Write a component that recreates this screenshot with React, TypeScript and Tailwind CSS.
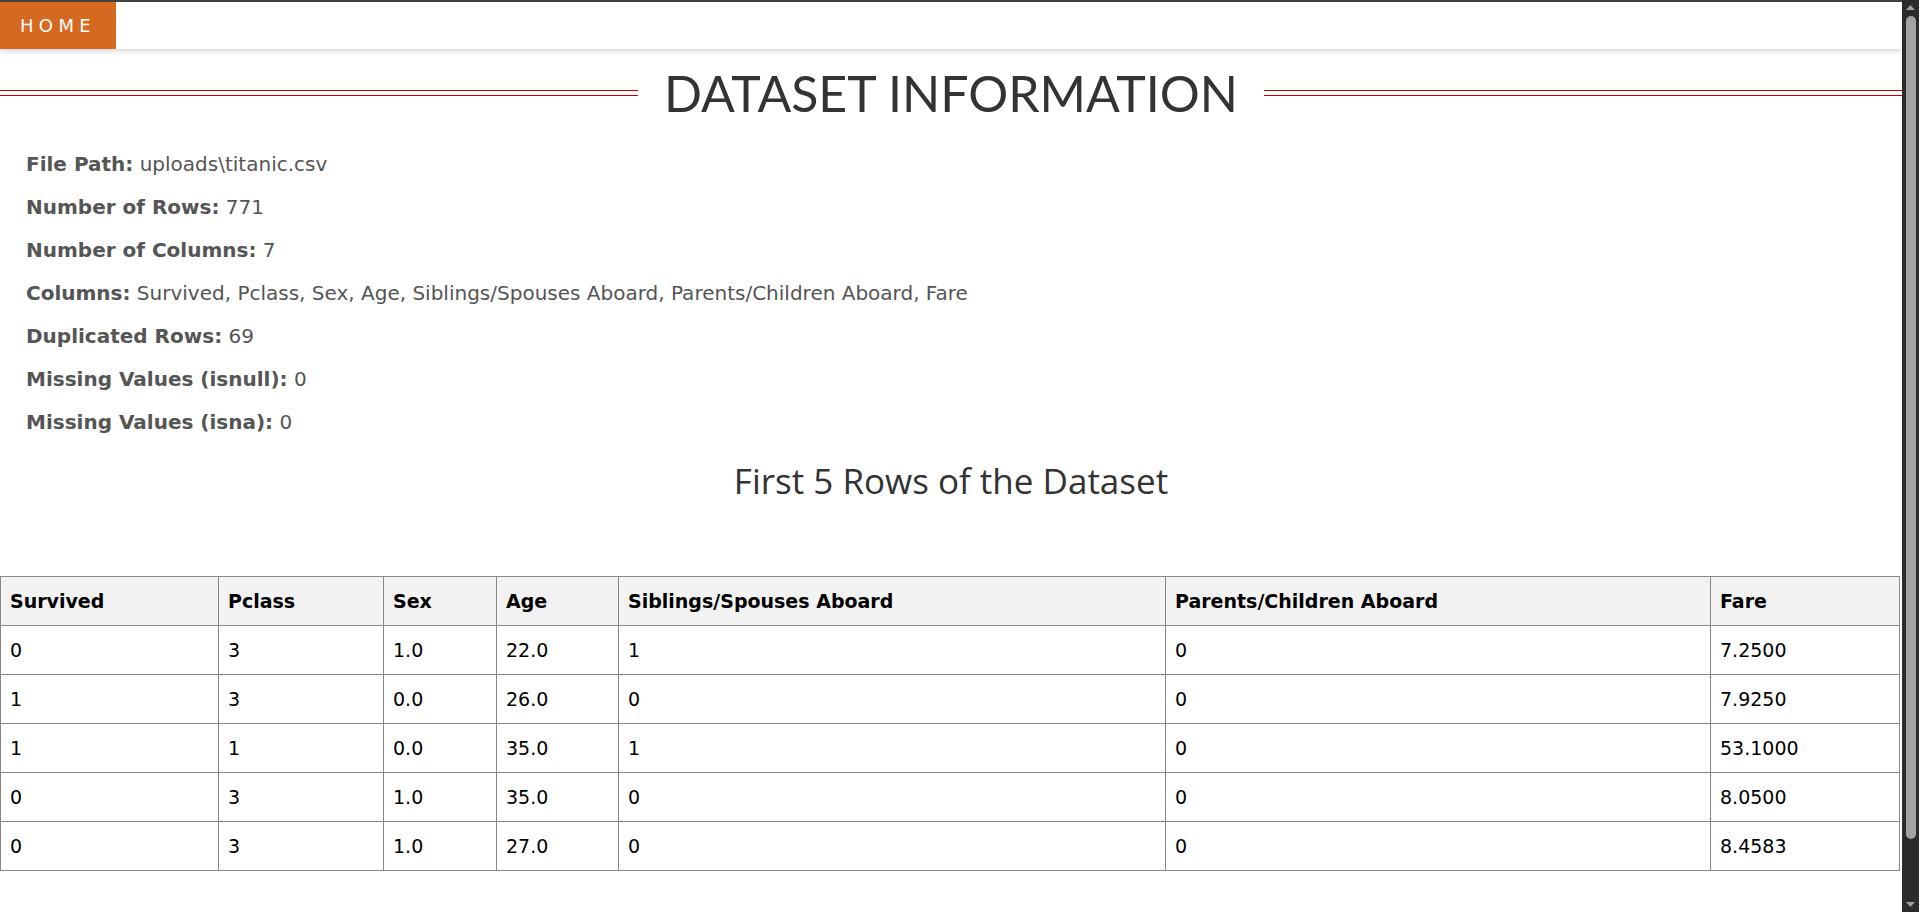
import React from 'react';

const COLUMNS = [
    { key: 'Survived', width: 'w-[218px]' },
    { key: 'Pclass', width: 'w-[165px]' },
    { key: 'Sex', width: 'w-[113px]' },
    { key: 'Age', width: 'w-[122px]' },
    { key: 'Siblings/Spouses Aboard', width: 'w-[547px]' },
    { key: 'Parents/Children Aboard', width: 'w-[545px]' },
    { key: 'Fare', width: '' },
];

const ROWS = [
    ['0', '3', '1.0', '22.0', '1', '0', '7.2500'],
    ['1', '3', '0.0', '26.0', '0', '0', '7.9250'],
    ['1', '1', '0.0', '35.0', '1', '0', '53.1000'],
    ['0', '3', '1.0', '35.0', '0', '0', '8.0500'],
    ['0', '3', '1.0', '27.0', '0', '0', '8.4583'],
];

const INFO: [string, string][] = [
    ['File Path:', 'uploads\\titanic.csv'],
    ['Number of Rows:', '771'],
    ['Number of Columns:', '7'],
    ['Columns:', 'Survived, Pclass, Sex, Age, Siblings/Spouses Aboard, Parents/Children Aboard, Fare'],
    ['Duplicated Rows:', '69'],
    ['Missing Values (isnull):', '0'],
    ['Missing Values (isna):', '0'],
];

function TitleRule() {
    return <div className="flex-1 h-[6px] border-t border-b border-[#c00000]" />;
}

// dark scrollbar as seen in the screenshot
function ScrollTrack() {
    return (
        <div className="w-[17px] h-full bg-[#2b2b2b] flex flex-col items-center shrink-0">
            <svg width="17" height="15" viewBox="0 0 17 15" className="shrink-0">
                <path d="M4 10 L8.5 5 L13 10 Z" fill="#a3a3a3" />
            </svg>
            <div className="w-[10px] flex-1 rounded-full bg-[#a3a3a3] mt-[1px] mb-[58px]" />
            <svg width="17" height="15" viewBox="0 0 17 15" className="shrink-0">
                <path d="M4 5 L8.5 10 L13 5 Z" fill="#a3a3a3" />
            </svg>
        </div>
    );
}

export default function App() {
    return (
        <div className="h-screen flex bg-white overflow-hidden">
            <div className="flex-1 min-w-0 border-t-2 border-[#444]">
                <nav className="h-[47px] bg-white shadow-[0_2px_6px_rgba(0,0,0,0.18)] flex">
                    <a
                        href="#"
                        className="w-[116px] h-full bg-[#d5691f] text-white flex items-center justify-center tracking-[0.3em] text-[18px] [font-family:Verdana,'DejaVu_Sans',sans-serif]"
                    >
                        HOME
                    </a>
                </nav>

                <div className="flex items-center mt-[14px]">
                    <TitleRule />
                    <h1 className="px-[26px] text-[50px] leading-[60px] text-[#333] [font-family:Lato,'Open_Sans',sans-serif] font-normal">
                        DATASET INFORMATION
                    </h1>
                    <TitleRule />
                </div>

                <div className="px-[26px] pt-[20px] text-[#555] text-[20px] [font-family:'DejaVu_Sans',Verdana,sans-serif]">
                    {INFO.map(([label, value]) => (
                        <p key={label} className="h-[43px] leading-[43px]">
                            <b className="font-bold">{label}</b> {value}
                        </p>
                    ))}
                </div>

                <h2 className="text-center text-[35px] text-[#333] mt-[15px] leading-[44px] [font-family:'Open_Sans',sans-serif]">
                    First 5 Rows of the Dataset
                </h2>

                <table className="mt-[73px] w-[1900px] border-collapse text-[19px] text-black [font-family:'DejaVu_Sans',Verdana,sans-serif]">
                    <thead>
                        <tr className="bg-[#f2f2f2]">
                            {COLUMNS.map(c => (
                                <th key={c.key} className={`${c.width} h-[49px] px-[9px] text-left font-bold border border-[#888]`}>
                                    {c.key}
                                </th>
                            ))}
                        </tr>
                    </thead>
                    <tbody>
                        {ROWS.map((r, i) => (
                            <tr key={i}>
                                {r.map((v, j) => (
                                    <td key={j} className="h-[49px] px-[9px] border border-[#888]">{v}</td>
                                ))}
                            </tr>
                        ))}
                    </tbody>
                </table>
            </div>
            <ScrollTrack />
        </div>
    );
}
